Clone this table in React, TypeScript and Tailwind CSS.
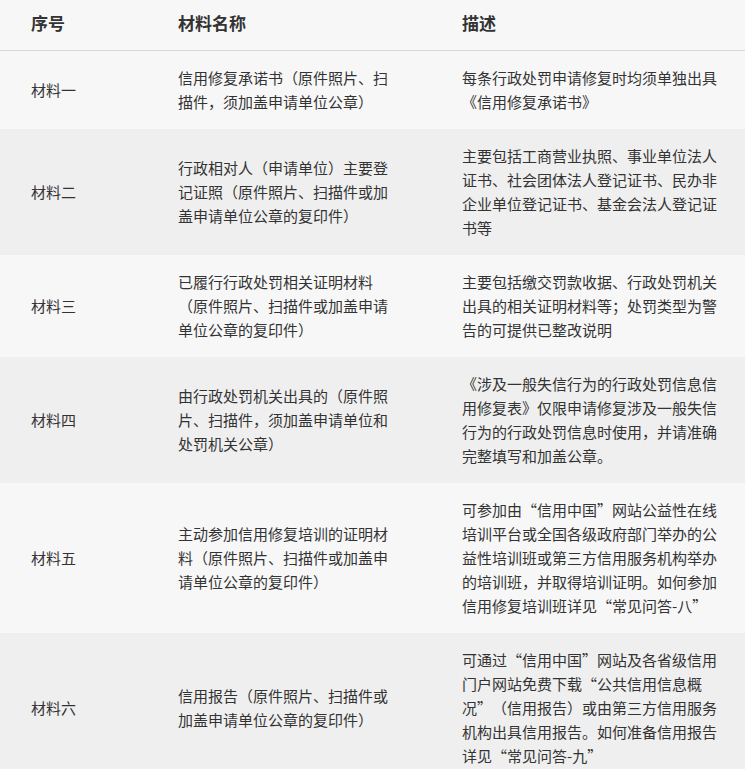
const rows = [
  {
    no: "材料一",
    name: "信用修复承诺书（原件照片、扫描件，须加盖申请单位公章）",
    desc: "每条行政处罚申请修复时均须单独出具《信用修复承诺书》",
  },
  {
    no: "材料二",
    name: "行政相对人（申请单位）主要登记证照（原件照片、扫描件或加盖申请单位公章的复印件）",
    desc: "主要包括工商营业执照、事业单位法人证书、社会团体法人登记证书、民办非企业单位登记证书、基金会法人登记证书等",
  },
  {
    no: "材料三",
    name: "已履行行政处罚相关证明材料（原件照片、扫描件或加盖申请单位公章的复印件）",
    desc: "主要包括缴交罚款收据、行政处罚机关出具的相关证明材料等；处罚类型为警告的可提供已整改说明",
  },
  {
    no: "材料四",
    name: "由行政处罚机关出具的（原件照片、扫描件，须加盖申请单位和处罚机关公章）",
    desc: "《涉及一般失信行为的行政处罚信息信用修复表》仅限申请修复涉及一般失信行为的行政处罚信息时使用，并请准确完整填写和加盖公章。",
  },
  {
    no: "材料五",
    name: "主动参加信用修复培训的证明材料（原件照片、扫描件或加盖申请单位公章的复印件）",
    desc: "可参加由“信用中国”网站公益性在线培训平台或全国各级政府部门举办的公益性培训班或第三方信用服务机构举办的培训班，并取得培训证明。如何参加信用修复培训班详见“常见问答-八”",
  },
  {
    no: "材料六",
    name: "信用报告（原件照片、扫描件或加盖申请单位公章的复印件）",
    desc: "可通过“信用中国”网站及各省级信用门户网站免费下载“公共信用信息概况”（信用报告）或由第三方信用服务机构出具信用报告。如何准备信用报告详见“常见问答-九”",
  },
];

export default function App() {
  return (
    <div
      className="w-[745px] min-h-[769px] bg-[#f7f7f7] text-[#333] [text-spacing-trim:space-all]"
      style={{ fontFamily: '"Noto Sans CJK SC", "Noto Sans", sans-serif' }}
      lang="zh-CN"
    >
      {/* header */}
      <div className="grid grid-cols-[178px_284px_1fr] h-[51px] items-center border-b border-[#d9d9d9] text-[17px] font-bold pb-[4px]">
        <div className="pl-[31px]">序号</div>
        <div>材料名称</div>
        <div>描述</div>
      </div>

      {rows.map((r, i) => (
        <div
          key={r.no}
          className={`grid grid-cols-[178px_284px_1fr] items-center py-[15px] text-[15px] leading-[24px] ${
            i % 2 === 1 ? "bg-[#efefef]" : "bg-[#f7f7f7]"
          }`}
        >
          <div className="pl-[31px]">{r.no}</div>
          <div className="w-[212px]">{r.name}</div>
          <div className="w-[258px]">{r.desc}</div>
        </div>
      ))}
    </div>
  );
}
